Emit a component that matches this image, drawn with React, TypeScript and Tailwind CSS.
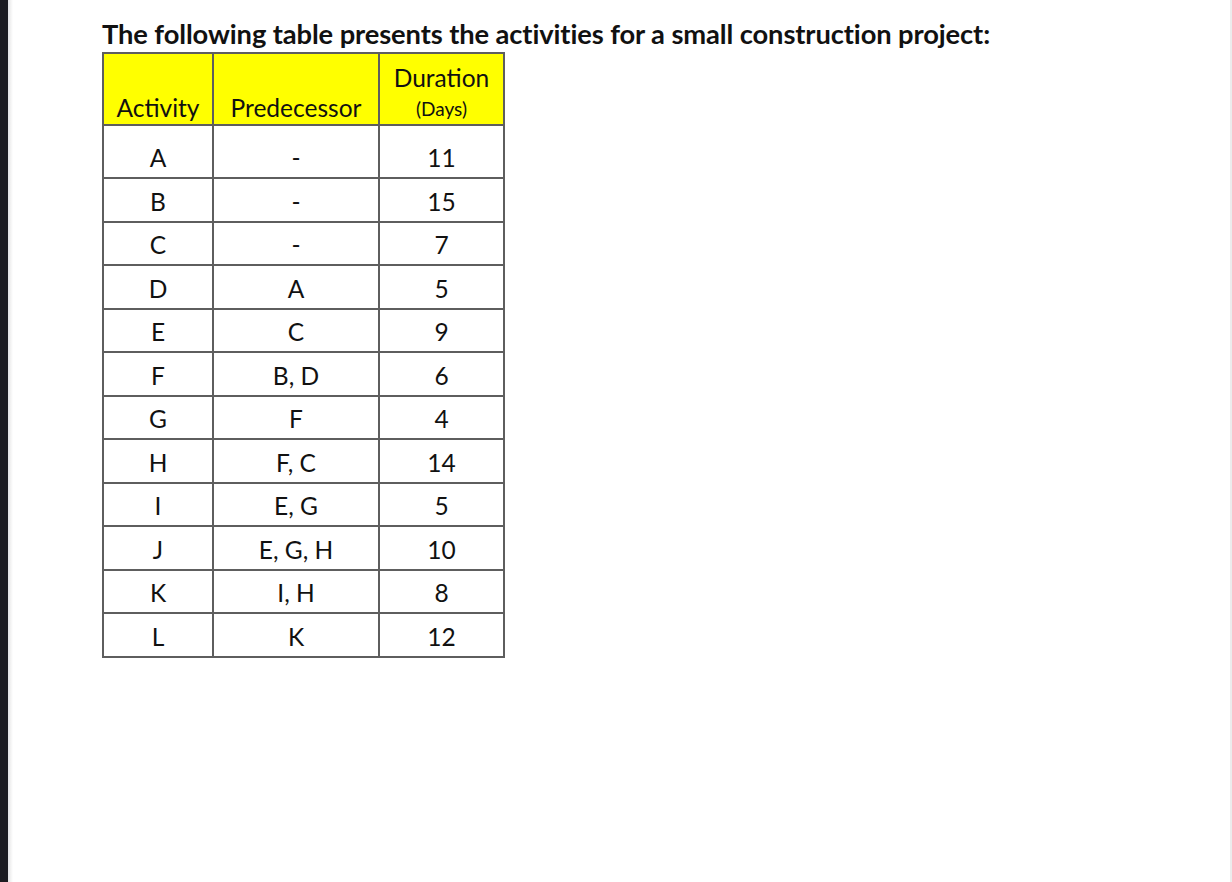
const rows: [string, string, string][] = [
  ['A', '-', '11'],
  ['B', '-', '15'],
  ['C', '-', '7'],
  ['D', 'A', '5'],
  ['E', 'C', '9'],
  ['F', 'B, D', '6'],
  ['G', 'F', '4'],
  ['H', 'F, C', '14'],
  ['I', 'E, G', '5'],
  ['J', 'E, G, H', '10'],
  ['K', 'I, H', '8'],
  ['L', 'K', '12'],
];

export default function App() {
  return (
    <div className="flex h-[882px] w-full bg-white text-[#111]" style={{ fontFamily: 'Lato, "Open Sans", sans-serif' }}>
      {/* dark edge of the scanned page */}
      <div className="w-[8px] bg-[#1c1c21]" />
      <div className="w-[5px] bg-gradient-to-r from-[#e4e4e4] to-white" />

      <div className="flex-1 pl-[89px] pt-[16px]">
        <h1 className="text-[27.3px] font-bold leading-[35px] tracking-[-0.1px]">
          The following table presents the activities for a small construction project:
        </h1>

        <table className="mt-[1px] border-collapse text-center text-[24.5px]">
          <thead>
            <tr className="h-[72px] bg-[#ffff00]">
              <th className="w-[110px] border-2 border-[#5e5e5e] px-0 pb-[2px] align-bottom font-normal leading-[28px]">
                Activity
              </th>
              <th className="w-[166px] border-2 border-[#5e5e5e] px-0 pb-[2px] align-bottom font-normal leading-[28px]">
                Predecessor
              </th>
              <th className="w-[125px] border-2 border-[#5e5e5e] px-0 pb-0 align-bottom font-normal leading-[28px]">
                <div className="mb-[2px]">Duration</div>
                <div className="text-[19px] leading-[30px]">(Days)</div>
              </th>
            </tr>
          </thead>
          <tbody>
            {rows.map(([act, pred, dur], i) => (
              <tr key={act} className={i === 0 ? 'h-[53px]' : 'h-[43.5px]'}>
                <td className={`border-2 border-[#5e5e5e] align-middle leading-none ${i === 0 ? 'pt-[13px]' : 'pt-[4px]'}`}>{act}</td>
                <td className={`border-2 border-[#5e5e5e] align-middle leading-none ${i === 0 ? 'pt-[13px]' : 'pt-[4px]'}`}>{pred}</td>
                <td className={`border-2 border-[#5e5e5e] align-middle leading-none ${i === 0 ? 'pt-[13px]' : 'pt-[4px]'}`}>{dur}</td>
              </tr>
            ))}
          </tbody>
        </table>
      </div>

      <div className="w-[2px] bg-[#ececec]" />
    </div>
  );
}
